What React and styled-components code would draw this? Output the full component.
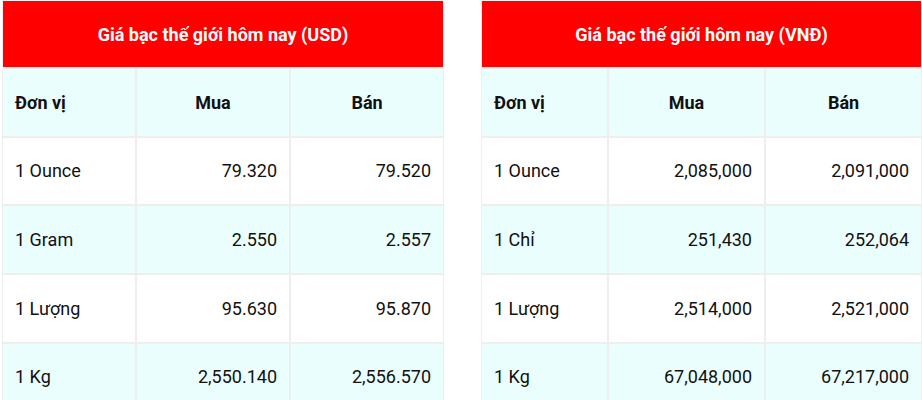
import styled, { createGlobalStyle } from "styled-components";

const GlobalStyle = createGlobalStyle`
  body {
    margin: 0;
    background: #fff;
    font-family: Roboto, "Noto Sans", Arial, sans-serif;
  }
`;

const Page = styled.div`
  display: flex;
  align-items: flex-start;
  gap: 37px;
  padding-left: 2px;
`;

const Table = styled.table`
  width: ${(p) => p.$width}px;
  table-layout: fixed;
  border-collapse: separate;
  border-spacing: 0;
  font-size: 18px;
  color: #111;
`;

const Col = styled.col`
  width: ${(p) => p.$w}px;
`;

const Title = styled.th`
  height: 66px;
  padding: 0 12px;
  border: 1px solid #eeeeee;
  background: #ff0000;
  color: #fff;
  font-weight: 700;
  text-align: center;
`;

const Row = styled.tr`
  background: ${(p) => (p.$shade ? "#ebfefe" : "#fff")};
`;

const HeadCell = styled.th`
  height: 66.67px;
  padding: 0 12px;
  border: 1px solid #eeeeee;
  font-weight: 700;
  text-align: ${(p) => (p.$left ? "left" : "center")};
`;

const Cell = styled.td`
  height: 66.67px;
  padding: 0 12px;
  border: 1px solid #eeeeee;
  text-align: ${(p) => (p.$num ? "right" : "left")};
`;

const tables = [
  {
    title: "Giá bạc thế giới hôm nay (USD)",
    width: 442,
    cols: [134, 154, 154],
    rows: [
      ["1 Ounce", "79.320", "79.520"],
      ["1 Gram", "2.550", "2.557"],
      ["1 Lượng", "95.630", "95.870"],
      ["1 Kg", "2,550.140", "2,556.570"],
    ],
  },
  {
    title: "Giá bạc thế giới hôm nay (VNĐ)",
    width: 441,
    cols: [127, 157, 157],
    rows: [
      ["1 Ounce", "2,085,000", "2,091,000"],
      ["1 Chỉ", "251,430", "252,064"],
      ["1 Lượng", "2,514,000", "2,521,000"],
      ["1 Kg", "67,048,000", "67,217,000"],
    ],
  },
];

const PriceTable = ({ title, width, cols, rows }) => (
  <Table $width={width}>
    <colgroup>
      {cols.map((w, i) => (
        <Col key={i} $w={w} />
      ))}
    </colgroup>
    <thead>
      <tr>
        <Title colSpan={3}>{title}</Title>
      </tr>
      <Row $shade>
        <HeadCell $left>Đơn vị</HeadCell>
        <HeadCell>Mua</HeadCell>
        <HeadCell>Bán</HeadCell>
      </Row>
    </thead>
    <tbody>
      {rows.map((r, i) => (
        <Row key={r[0]} $shade={i % 2 === 1}>
          <Cell>{r[0]}</Cell>
          <Cell $num>{r[1]}</Cell>
          <Cell $num>{r[2]}</Cell>
        </Row>
      ))}
    </tbody>
  </Table>
);

const App = () => (
  <>
    <GlobalStyle />
    <Page>
      {tables.map((t) => (
        <PriceTable key={t.title} {...t} />
      ))}
    </Page>
  </>
);

export default App;
